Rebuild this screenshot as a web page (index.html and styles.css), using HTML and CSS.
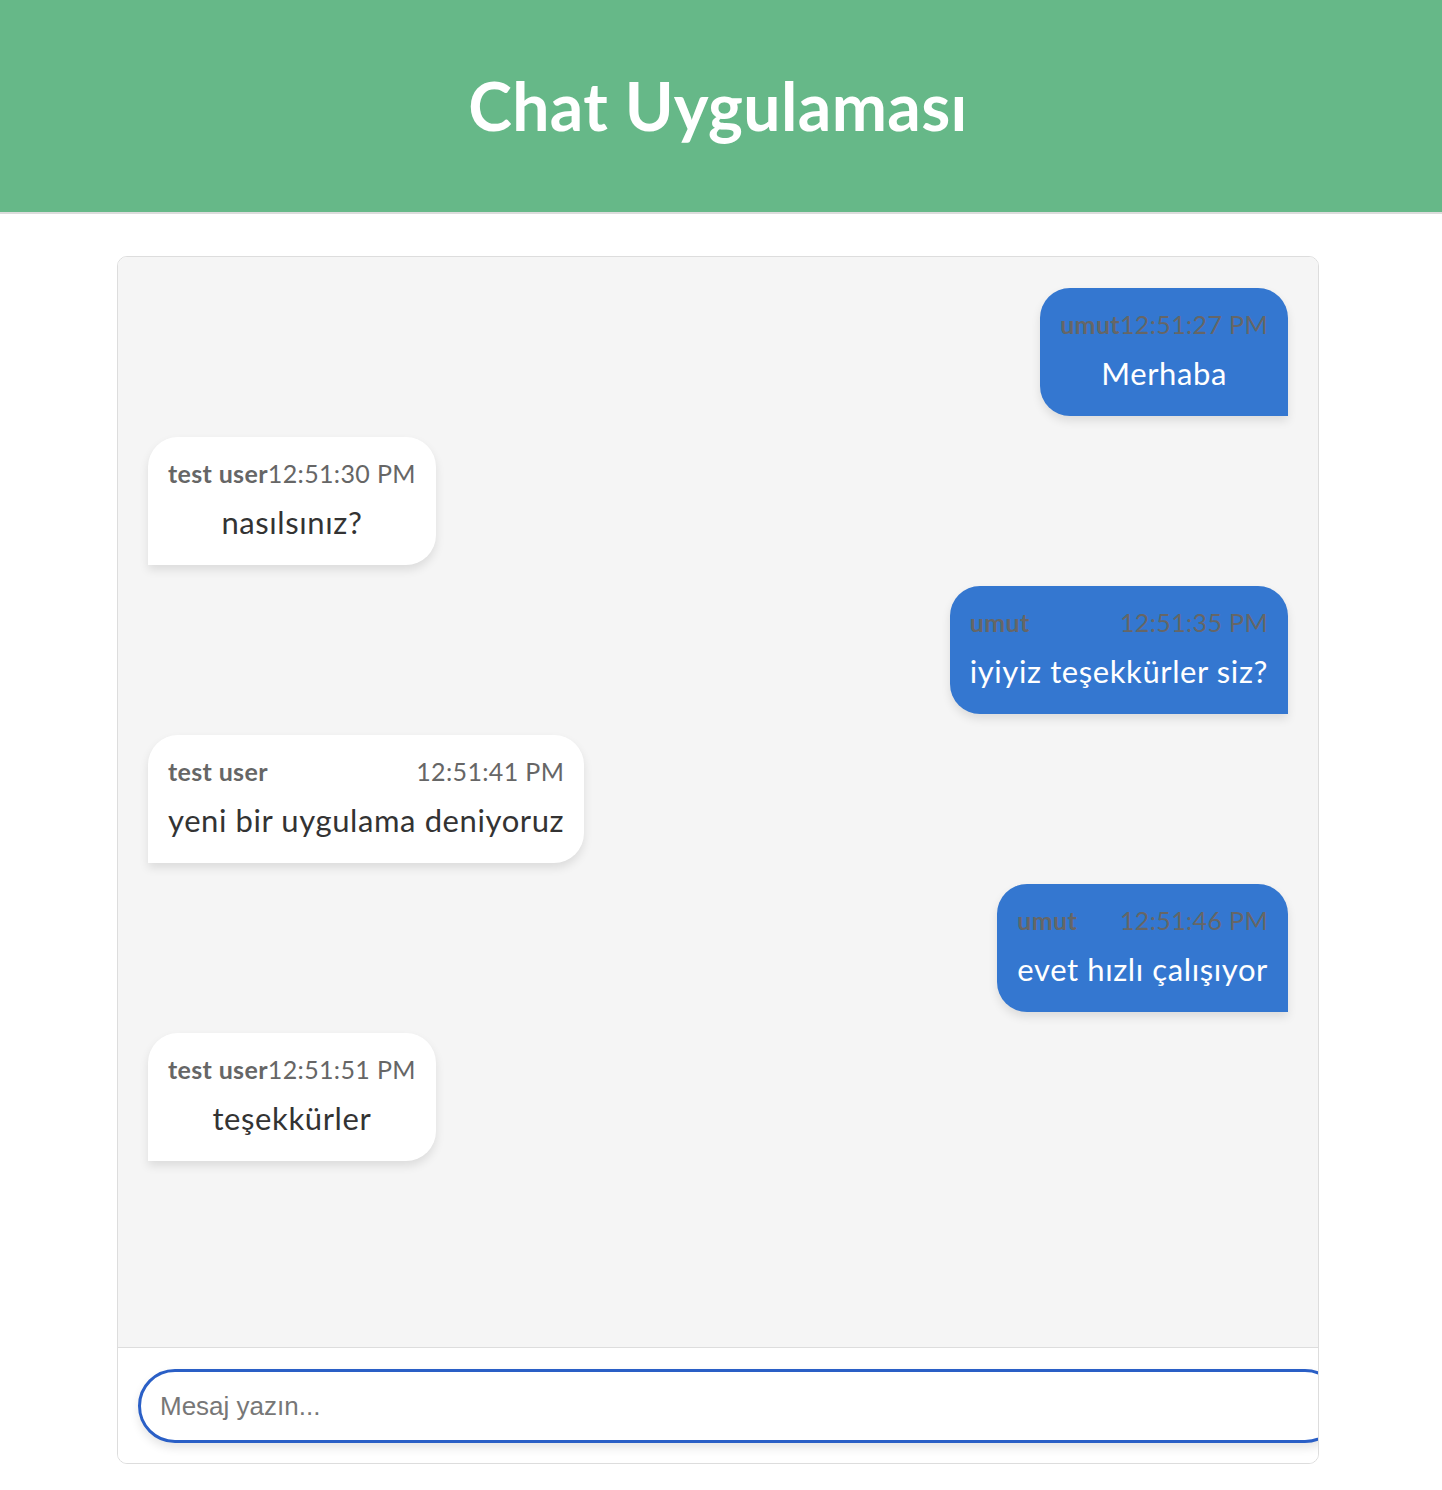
FILE: index.html
```html
<!DOCTYPE html>
<html lang="tr">
<head>
<meta charset="utf-8">
<title>Chat Uygulaması</title>
<link rel="stylesheet" href="styles.css">
</head>
<body>
<header class="topbar">
  <h1 class="title">Chat Uygulaması</h1>
</header>
<div class="page">
  <main class="chat">
    <div class="messages">
      <div class="msg sent">
        <div class="meta"><span class="user">umut</span><span class="time">12:51:27 PM</span></div>
        <div class="text">Merhaba</div>
      </div>
      <div class="msg received">
        <div class="meta"><span class="user">test user</span><span class="time">12:51:30 PM</span></div>
        <div class="text">nasılsınız?</div>
      </div>
      <div class="msg sent">
        <div class="meta"><span class="user">umut</span><span class="time">12:51:35 PM</span></div>
        <div class="text">iyiyiz teşekkürler siz?</div>
      </div>
      <div class="msg received">
        <div class="meta"><span class="user">test user</span><span class="time">12:51:41 PM</span></div>
        <div class="text">yeni bir uygulama deniyoruz</div>
      </div>
      <div class="msg sent">
        <div class="meta"><span class="user">umut</span><span class="time">12:51:46 PM</span></div>
        <div class="text">evet hızlı çalışıyor</div>
      </div>
      <div class="msg received">
        <div class="meta"><span class="user">test user</span><span class="time">12:51:51 PM</span></div>
        <div class="text">teşekkürler</div>
      </div>
    </div>
    <div class="composer">
      <input class="input" type="text" placeholder="Mesaj yazın...">
    </div>
  </main>
</div>
</body>
</html>
```

FILE: styles.css
```css
html, body {
  margin: 0;
  padding: 0;
  background: #ffffff;
}

body {
  font-family: Lato, "Noto Sans", sans-serif;
}

.topbar {
  background: #66b888;
  border-bottom: 2px solid #dcdcdc;
  height: 212px;
  padding-right: 6px;
  display: flex;
  align-items: center;
  justify-content: center;
}

.title {
  margin: 0;
  color: #ffffff;
  font-size: 66px;
  font-weight: 700;
  letter-spacing: 0.4px;
  line-height: 1;
}

.page {
  padding-right: 6px;
}

.chat {
  width: 1200px;
  margin: 42px auto 0;
  border: 1px solid #dddddd;
  border-radius: 10px;
  overflow: clip;
}

.messages {
  box-sizing: border-box;
  height: 1091px;
  padding: 31px 30px;
  background: #f5f5f5;
  display: flex;
  flex-direction: column;
  align-items: flex-start;
  gap: 21px;
  border-bottom: 1px solid #dddddd;
}

.msg {
  padding: 20px;
  text-align: center;
  box-shadow: 0 5px 10px rgba(0, 0, 0, 0.1);
}

.msg.sent {
  align-self: flex-end;
  background: #3477d0;
  color: #ffffff;
  border-radius: 30px 30px 0 30px;
}

.msg.received {
  background: #ffffff;
  color: #333333;
  border-radius: 30px 30px 30px 0;
}

.meta {
  display: flex;
  justify-content: space-between;
  font-size: 25px;
  letter-spacing: 0.35px;
  line-height: 32px;
  color: #666666;
  margin-bottom: 10px;
}

.user {
  font-weight: 700;
}

.text {
  font-size: 31px;
  letter-spacing: 0.6px;
  line-height: 46px;
}

.composer {
  background: #ffffff;
  padding: 21px 20px 20px;
  height: 74px;
}

.input {
  box-sizing: content-box;
  width: 100%;
  height: 68px;
  padding: 0 19px;
  border: 3px solid #2a5fc6;
  border-radius: 37px;
  outline: none;
  font-family: "Liberation Sans", Arial, sans-serif;
  font-size: 26px;
  color: #333333;
  box-shadow: 0 5px 10px rgba(0, 0, 0, 0.1);
}

.input::placeholder {
  color: #777777;
}
```
